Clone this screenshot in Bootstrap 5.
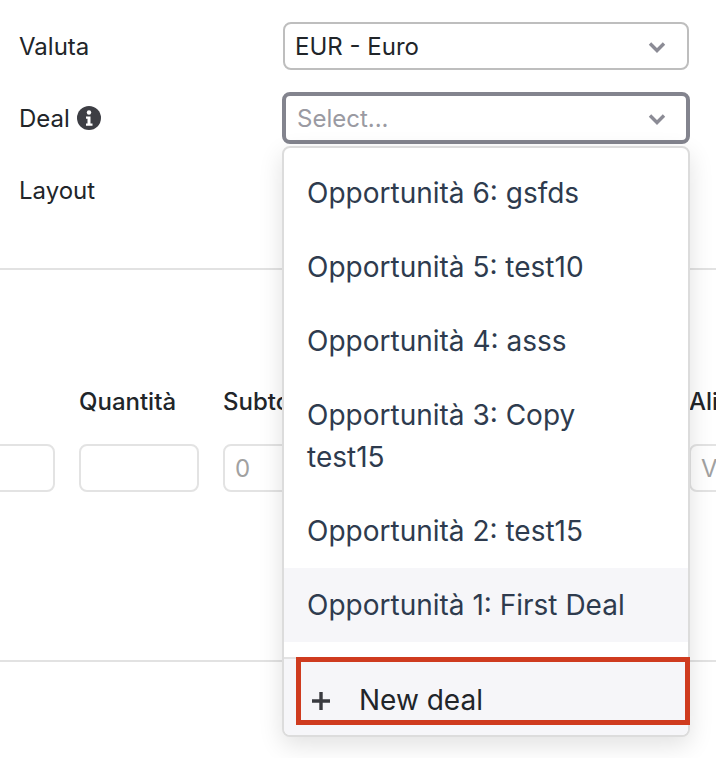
<!doctype html>
<html lang="en">

<head>
    <meta charset="utf-8">
    <meta name="viewport" content="width=device-width, initial-scale=1">
    <title>Deal</title>
    <link href="https://cdn.jsdelivr.net/npm/bootstrap@5.3.5/dist/css/bootstrap.min.css" rel="stylesheet">
    <style>
        body {
            font-family: Inter, "Liberation Sans", sans-serif;
            color: #212529;
            background: #fff;
            overflow: hidden;
            height: 758px;
        }

        .form-area {
            padding: 22px 26px 0 19px;
            height: 268px;
        }

        .form-line {
            height: 48px;
            margin-bottom: 24px;
            font-size: 24px;
        }

        .form-name {
            width: 264px;
            padding-top: 1px;
        }

        .info-icon {
            width: 24px;
            height: 24px;
            margin-left: 7px;
            margin-top: -1px;
        }

        .picker {
            width: 406px;
            height: 48px;
            position: relative;
            padding: 1px 21px 0 10px;
            border: 2px solid #bebebe;
            border-radius: 8px;
        }

        .picker-open {
            width: 408px;
            height: 52px;
            margin-left: -1px;
            padding-left: 11px;
            padding-right: 20px;
            border: 4px solid #83848e;
            color: #9a9aa2;
        }

        .chevron {
            width: 18px;
            height: 12px;
        }

        .page-rule {
            border-top: 2px solid #e2e2e2;
            opacity: 1;
            margin: 0;
        }

        .lines-area {
            height: 390px;
            padding-top: 116px;
            overflow: hidden;
        }

        .lines-row {
            margin-left: -65px;
            gap: 24px;
            width: 1000px;
        }

        .line-col {
            width: 120px;
            flex: none;
        }

        .line-col-wide {
            width: 442px;
        }

        .line-title {
            font-size: 24px;
            font-weight: 500;
            height: 32px;
            line-height: 32px;
            margin-bottom: 26px;
        }

        .line-input {
            height: 48px;
            border: 2px solid #e3e3e3;
            border-radius: 8px;
            font-size: 24px;
            color: #a1a1a1;
            padding: 0 10px;
            line-height: 46px;
        }

        .deal-menu.dropdown-menu {
            top: 50px;
            left: -4px;
            width: 408px;
            padding: 8px 0 0;
            border: 2px solid #dcdcdc;
            border-radius: 8px;
            box-shadow: 0 8px 24px rgba(0, 0, 0, .12);
        }

        .deal-menu .dropdown-item {
            font-size: 28px;
            line-height: 42px;
            padding: 16px 40px 16px 23px;
            color: #2e3b4e;
            white-space: normal;
        }

        .deal-menu .dropdown-item.is-hover {
            background: #f6f6f9;
        }

        .deal-foot {
            margin-top: 15px;
            height: 78px;
            border-top: 2px solid #e2e2e2;
            border-radius: 0 0 6px 6px;
            background: #f6f6f9;
            color: #212529;
            font-size: 28px;
            padding: 20px 0 0 27px;
            line-height: 42px;
            position: relative;
        }

        .plus-icon {
            width: 20px;
            height: 20px;
            margin-right: 28px;
            margin-top: -2px;
            vertical-align: middle;
        }

        .red-mark {
            position: absolute;
            left: 12px;
            right: -2px;
            top: -2px;
            height: 68px;
            border: 5px solid #cf3b1f;
        }
    </style>
</head>

<body>
    <div class="form-area">
        <div class="form-line d-flex align-items-center">
            <div class="form-name">Valuta</div>
            <div class="picker d-flex align-items-center justify-content-between">
                <span>EUR - Euro</span>
                <svg class="chevron" viewBox="0 0 18 12"><path d="M2 2.500l7 7 7-7" fill="none" stroke="#8b8b95" stroke-width="3.4"/></svg>
            </div>
        </div>
        <div class="form-line d-flex align-items-center">
            <div class="form-name d-flex align-items-center">Deal
                <svg class="info-icon" viewBox="0 0 24 24">
                    <circle cx="12" cy="12" r="12" fill="#3d3e44"/>
                    <circle cx="12" cy="6.500" r="2.200" fill="#fff"/>
                    <path d="M9 10.500h4.500v7H15.500v2.200h-6.500v-2.200h1.500v-4.800H9z" fill="#fff"/>
                </svg>
            </div>
            <div class="picker picker-open d-flex align-items-center justify-content-between">
                <span>Select...</span>
                <svg class="chevron" viewBox="0 0 18 12"><path d="M2 2.500l7 7 7-7" fill="none" stroke="#8b8b95" stroke-width="3.4"/></svg>
                <div class="dropdown-menu show deal-menu">
                    <a class="dropdown-item" href="#">Opportunità 6: gsfds</a>
                    <a class="dropdown-item" href="#">Opportunità 5: test10</a>
                    <a class="dropdown-item" href="#">Opportunità 4: asss</a>
                    <a class="dropdown-item" href="#">Opportunità 3: Copy test15</a>
                    <a class="dropdown-item" href="#">Opportunità 2: test15</a>
                    <a class="dropdown-item is-hover" href="#">Opportunità 1: First Deal</a>
                    <div class="deal-foot">
                        <svg class="plus-icon" viewBox="0 0 20 20"><path d="M10 1v18M1 10h18" stroke="#3a3b40" stroke-width="3.400" fill="none"/></svg>New deal
                        <div class="red-mark"></div>
                    </div>
                </div>
            </div>
        </div>
        <div class="form-line d-flex align-items-center">
            <div class="form-name">Layout</div>
        </div>
    </div>
    <hr class="page-rule">
    <div class="lines-area">
        <div class="lines-row d-flex">
            <div class="line-col">
                <div class="line-title">&nbsp;</div>
                <div class="line-input"></div>
            </div>
            <div class="line-col">
                <div class="line-title">Quantità</div>
                <div class="line-input"></div>
            </div>
            <div class="line-col line-col-wide">
                <div class="line-title">Subtotale</div>
                <div class="line-input">0</div>
            </div>
            <div class="line-col">
                <div class="line-title">Aliquota</div>
                <div class="line-input">Valore</div>
            </div>
        </div>
    </div>
    <hr class="page-rule">

    <script src="https://cdn.jsdelivr.net/npm/bootstrap@5.3.5/dist/js/bootstrap.bundle.min.js"></script>
</body>

</html>
